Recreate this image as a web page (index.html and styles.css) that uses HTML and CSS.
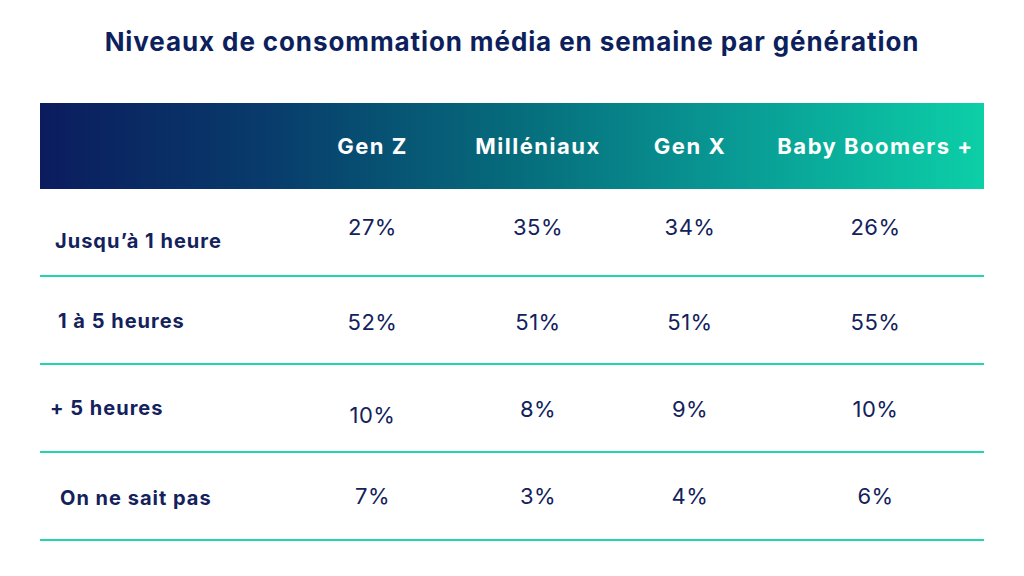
FILE: index.html
```html
<!DOCTYPE html>
<html lang="fr">
<head>
<meta charset="utf-8">
<link rel="stylesheet" href="styles.css">
</head>
<body>
<div class="page">
  <h1 class="title">Niveaux de consommation média en semaine par génération</h1>
  <div class="table">
    <div class="head">
      <div class="hcell"></div>
      <div class="hcell">Gen Z</div>
      <div class="hcell">Milléniaux</div>
      <div class="hcell">Gen X</div>
      <div class="hcell c4">Baby Boomers +</div>
    </div>
    <div class="row r1">
      <div class="label l1">Jusqu’à 1 heure</div>
      <div class="val">27%</div>
      <div class="val">35%</div>
      <div class="val">34%</div>
      <div class="val c4">26%</div>
    </div>
    <div class="row r2">
      <div class="label l2">1 à 5 heures</div>
      <div class="val">52%</div>
      <div class="val">51%</div>
      <div class="val">51%</div>
      <div class="val c4">55%</div>
    </div>
    <div class="row r3">
      <div class="label l3">+ 5 heures</div>
      <div class="val low">10%</div>
      <div class="val">8%</div>
      <div class="val">9%</div>
      <div class="val c4">10%</div>
    </div>
    <div class="row r4">
      <div class="label l4">On ne sait pas</div>
      <div class="val">7%</div>
      <div class="val">3%</div>
      <div class="val">4%</div>
      <div class="val c4">6%</div>
    </div>
  </div>
</div>
</body>
</html>
```
FILE: styles.css
```css
* { box-sizing: border-box; }
html, body { margin: 0; padding: 0; background: #ffffff; }
body { width: 1024px; height: 576px; overflow: hidden; font-family: "Inter", "Open Sans", sans-serif; color: #13215c; }
.page { padding: 26px 40px 0 40px; }
.title { margin: 0; height: 77px; font-size: 26px; font-weight: 700; text-align: center; color: #0d1f5d; line-height: 32px; letter-spacing: 0.9px; }
.table { width: 944px; }
.head, .row { display: grid; grid-template-columns: 250px 165px 166px 138px 225px; }
.head { height: 86px; background: linear-gradient(90deg, #0b1c5e 0%, #083d6c 25%, #066b7b 50%, #099d96 75%, #0ccfa7 100%); align-items: center; }
.hcell { color: #ffffff; font-weight: 700; font-size: 22px; text-align: center; letter-spacing: 1.5px; }
.c4 { padding-left: 8px; }
.row { height: 88px; border-bottom: 2px solid #22d3b0; align-items: start; }
.label { font-weight: 700; font-size: 20px; color: #13215c; letter-spacing: 1px; }
.val { font-size: 22px; text-align: center; color: #13215c; letter-spacing: 0.5px; }
.r1 .label { padding: 40px 0 0 15px; }
.r1 .val { padding-top: 25px; }
.r2 .label { padding: 32px 0 0 18px; }
.r2 .val { padding-top: 32px; }
.r3 .label { padding: 31px 0 0 10px; }
.r3 .val { padding-top: 31px; }
.r3 .val.low { padding-top: 37px; }
.r4 .label { padding: 33px 0 0 20px; }
.r4 .val { padding-top: 30px; }
```
